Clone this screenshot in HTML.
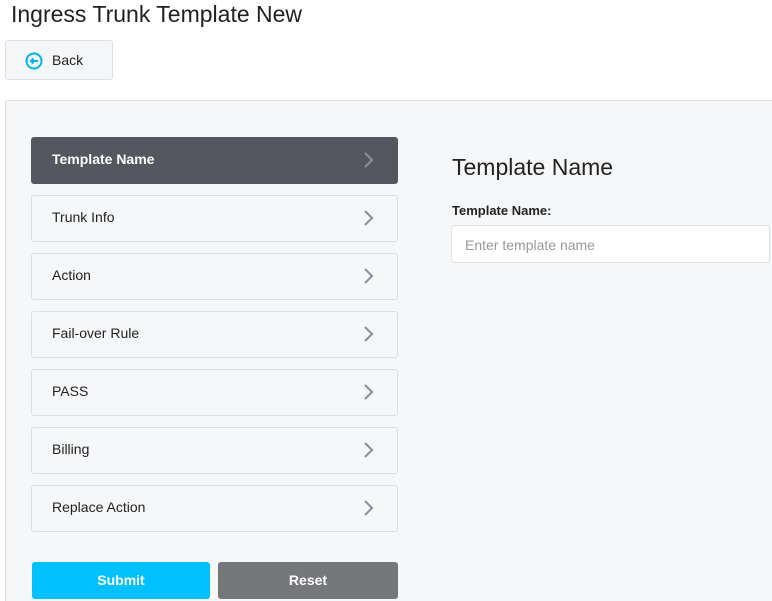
<!DOCTYPE html>
<html><head><style>
*{box-sizing:border-box;margin:0;padding:0}
html,body{width:772px;height:601px;overflow:hidden}
body{background:#fff;font-family:"Liberation Sans",sans-serif;color:#222;position:relative}
h1{position:absolute;left:11px;top:0;font-size:23px;font-weight:normal;color:#222;line-height:28px}
.back{position:absolute;left:5px;top:40px;width:108px;height:40px;border:1px solid #dcdfe3;border-radius:3px;background:#f6f7f9;font-size:14px}
.back svg{position:absolute;left:19px;top:11px}
.back span{position:absolute;left:46px;top:11px}
.panel{position:absolute;left:5px;top:100px;width:780px;height:520px;background:#f6f7f9;border:1px solid #dcdfe3;border-radius:3px}
.item{position:absolute;left:31px;width:367px;height:47px;border:1px solid #dcdfe3;border-radius:3px;background:#f6f7f9;font-size:14px;color:#222}
.item span{position:absolute;left:20px;top:13px}
.item svg{position:absolute;right:22px;top:13px}
.item.act{background:#54575d;border-color:#54575d;color:#fff;font-weight:bold}
.btn{position:absolute;top:562px;height:37px;border-radius:3px;color:#fff;font-size:14px;font-weight:bold;text-align:center;line-height:37px}
h2{position:absolute;left:452px;top:154px;font-size:23px;font-weight:normal;color:#222}
.lbl{position:absolute;left:452px;top:203px;font-size:13px;font-weight:bold;color:#222}
.inp{position:absolute;left:451px;top:225px;width:319px;height:38px;border:1px solid #dcdfe3;border-radius:4px;background:#fff;font-size:14px;color:#999;padding:11px 0 0 13px}
</style></head><body>
<h1>Ingress Trunk Template New</h1>
<div class="back"><svg width="18" height="18" viewBox="0 0 18 18"><circle cx="9" cy="9" r="7.5" fill="none" stroke="#00b4f0" stroke-width="2"/><path d="M13 9H6M8.5 6.5L6 9l2.5 2.5" fill="none" stroke="#00b4f0" stroke-width="2"/></svg><span>Back</span></div>
<div class="panel"></div>
<div class="item act" style="top:137px"><span>Template Name</span><svg width="12" height="18" viewBox="0 0 12 18"><path d="M2 2l7 7-7 7" fill="none" stroke="#8a8f99" stroke-width="2"/></svg></div>
<div class="item" style="top:195px"><span>Trunk Info</span><svg width="12" height="18" viewBox="0 0 12 18"><path d="M2 2l7 7-7 7" fill="none" stroke="#8a8f99" stroke-width="2"/></svg></div>
<div class="item" style="top:253px"><span>Action</span><svg width="12" height="18" viewBox="0 0 12 18"><path d="M2 2l7 7-7 7" fill="none" stroke="#8a8f99" stroke-width="2"/></svg></div>
<div class="item" style="top:311px"><span>Fail-over Rule</span><svg width="12" height="18" viewBox="0 0 12 18"><path d="M2 2l7 7-7 7" fill="none" stroke="#8a8f99" stroke-width="2"/></svg></div>
<div class="item" style="top:369px"><span>PASS</span><svg width="12" height="18" viewBox="0 0 12 18"><path d="M2 2l7 7-7 7" fill="none" stroke="#8a8f99" stroke-width="2"/></svg></div>
<div class="item" style="top:427px"><span>Billing</span><svg width="12" height="18" viewBox="0 0 12 18"><path d="M2 2l7 7-7 7" fill="none" stroke="#8a8f99" stroke-width="2"/></svg></div>
<div class="item" style="top:485px"><span>Replace Action</span><svg width="12" height="18" viewBox="0 0 12 18"><path d="M2 2l7 7-7 7" fill="none" stroke="#8a8f99" stroke-width="2"/></svg></div>
<div class="btn" style="left:32px;width:178px;background:#00c0ff">Submit</div>
<div class="btn" style="left:218px;width:180px;background:#75777b">Reset</div>
<h2>Template Name</h2>
<div class="lbl">Template Name:</div>
<div class="inp">Enter template name</div>
</body></html>
